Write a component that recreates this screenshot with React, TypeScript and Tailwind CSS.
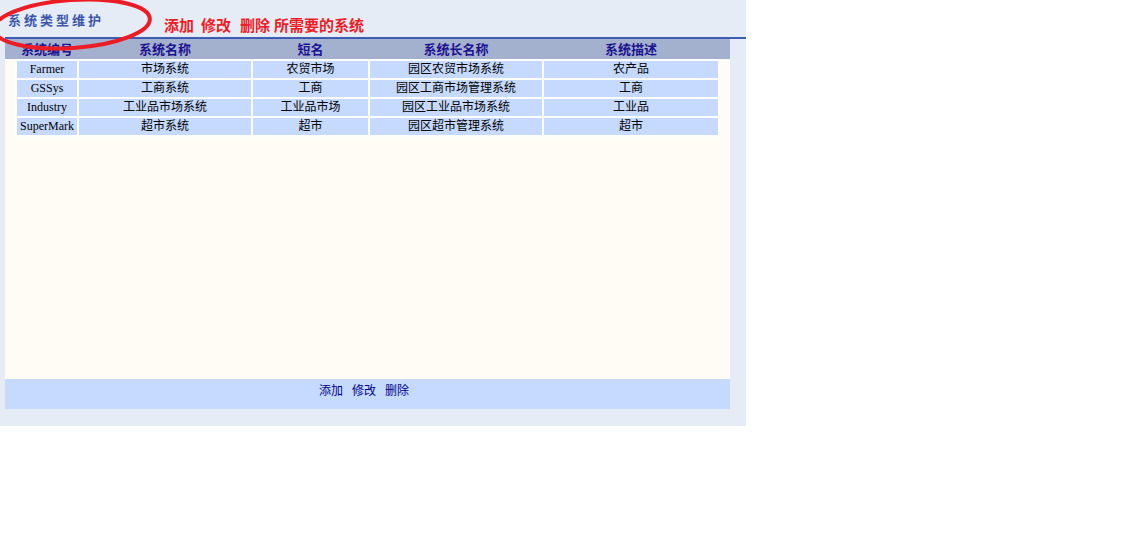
import React from "react";

const rows = [
  ["Farmer", "市场系统", "农贸市场", "园区农贸市场系统", "农产品"],
  ["GSSys", "工商系统", "工商", "园区工商市场管理系统", "工商"],
  ["Industry", "工业品市场系统", "工业品市场", "园区工业品市场系统", "工业品"],
  ["SuperMark", "超市系统", "超市", "园区超市管理系统", "超市"],
];

const headers = ["系统编号", "系统名称", "短名", "系统长名称", "系统描述"];

const cols = "grid-cols-[60px_172px_115px_172px_174px]";
const cjk = { fontFamily: '"Noto Sans CJK SC", sans-serif' };

export default function App() {
  return (
    <div className="w-[1130px] h-[550px] bg-white" style={{ fontFamily: '"Liberation Serif", "Noto Sans CJK SC", serif' }}>
      <div className="relative w-[746px] h-[426px] bg-[#e5ecf6] flex flex-col">
        <div className="h-[37px] flex items-start">
          <div className="pl-[8px] pt-[11px] text-[13px] leading-[18px] tracking-[3px] font-bold text-[#3d56aa]" style={cjk}>
            系统类型维护
          </div>
          <div className="ml-[60px] pt-[14px] flex text-[15px] leading-[22px] font-bold text-[#ee1c25] whitespace-nowrap" style={cjk}>
            <span>添加</span>
            <span className="ml-[7px]">修改</span>
            <span className="ml-[9px]">删除</span>
            <span className="ml-[4px]">所需要的系统</span>
          </div>
        </div>
        <div className="ml-[5px] h-[2px] bg-[#3e5cb6]" />
        <div className="ml-[5px] w-[725px] flex flex-col">
          <div className="h-[20px] bg-[#a3b1cf] pl-[12px]">
            <div className={`grid ${cols} gap-x-[2px] h-full items-center`}>
              {headers.map((h) => (
                <div key={h} className="text-center text-[13px] font-bold text-[#1c1290] leading-[20px]" style={cjk}>
                  {h}
                </div>
              ))}
            </div>
          </div>
          <div className="h-[320px] bg-[#fffbf5] pl-[10px]">
            <div className="flex w-fit flex-col gap-[2px] p-[2px] bg-white">
              {rows.map((r) => (
                <div key={r[0]} className={`grid ${cols} gap-x-[2px]`}>
                  {r.map((c, i) => (
                    <div key={i} className="h-[17px] bg-[#c6daff] text-center text-[12px] leading-[17px] text-black whitespace-nowrap">
                      {c}
                    </div>
                  ))}
                </div>
              ))}
            </div>
          </div>
          <div className="h-[30px] bg-[#c6daff] flex items-start justify-center pt-[3px] pr-[7px] text-[12px] leading-[16px] text-[#00008b]" style={cjk}>
            <span>添加</span>
            <span className="ml-[9px]">修改</span>
            <span className="ml-[9px]">删除</span>
          </div>
        </div>
        <svg className="absolute left-0 top-0 pointer-events-none" width="170" height="60" viewBox="0 0 170 60" style={{ overflow: "visible" }}>
          <ellipse cx="72" cy="24" rx="78" ry="24" fill="none" stroke="#ec1c24" strokeWidth="4" transform="rotate(-4 72 24)" />
        </svg>
      </div>
    </div>
  );
}
